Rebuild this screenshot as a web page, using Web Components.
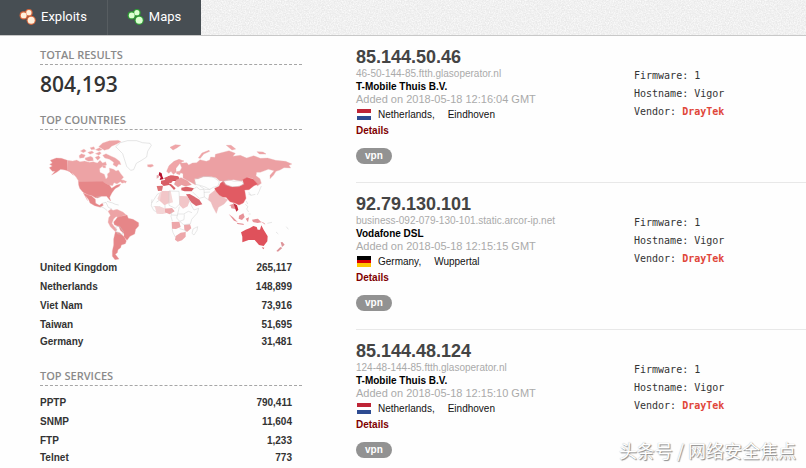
<!DOCTYPE html>
<html lang="en">
<head>
<meta charset="utf-8">
<title>Search results</title>
<style>
body{margin:0;background:#fefefe;color:#333;font-family:"Liberation Sans",Arial,sans-serif;font-size:10px}
</style>
</head>
<body>
<search-page></search-page>
<script>
function define(name, html, fill) {
  const t = document.createElement('template');
  t.innerHTML = html;
  customElements.define(name, class extends HTMLElement {
    constructor() {
      super();
      this.attachShadow({ mode: 'open' }).append(t.content.cloneNode(true));
    }
    connectedCallback() { if (fill) fill(this, this.shadowRoot); }
  });
}

define('nav-item', `
<style>
:host{display:block;--tone:#d9663b;--core:#fff0dc}
:host([tone=green]){--tone:#2f9e35;--core:#dcffd2}
:host(:not(:first-child)){border-left:1px solid #575d61}
a{display:flex;align-items:center;gap:4px;height:34px;padding:0 20px 0 19px;color:#fff;text-decoration:none;font:13px/34px Roboto,sans-serif}
svg{width:18px;height:18px;display:block}
</style>
<a href="#"><svg viewBox="0 0 18 18" aria-hidden="true"><g fill="var(--tone)"><circle cx="4.7" cy="7.4" r="4.1"/><circle cx="9.9" cy="4.7" r="3.8"/><circle cx="12.2" cy="12.3" r="4.6"/></g><g fill="var(--core)"><circle cx="4.7" cy="7.4" r="2.9"/><circle cx="9.9" cy="4.7" r="2.6"/><circle cx="12.2" cy="12.3" r="3.5"/></g></svg><slot></slot></a>`);

define('top-bar', `
<style>
:host{display:flex;height:36px;box-sizing:border-box;border-bottom:1px solid #c8c8c8;background-color:#eaeaea;
background-image:url("data:image/svg+xml,%3Csvg xmlns='http://www.w3.org/2000/svg' width='120' height='120'%3E%3Cfilter id='n'%3E%3CfeTurbulence type='fractalNoise' baseFrequency='.75' numOctaves='2' stitchTiles='stitch'/%3E%3CfeColorMatrix values='0 0 0 0 1 0 0 0 0 1 0 0 0 0 1 1.6 0 0 0 -.5'/%3E%3C/filter%3E%3Crect width='120' height='120' filter='url(%23n)'/%3E%3C/svg%3E")}
nav{display:flex;height:35px;background:#474e53}
</style><nav><slot></slot></nav>`);

define('side-section', `
<style>
:host{display:block}
h2{margin:0 0 9px;height:18px;border-bottom:1px dashed #a6a6a6;color:#8a8a8a;font:600 11px/16px "Open Sans",sans-serif;box-sizing:border-box}
:host([flush]) h2{margin-bottom:7px}
:host([map]) h2{margin-bottom:5px}
</style><h2></h2><slot></slot>`, (h, r) => r.querySelector('h2').textContent = h.getAttribute('heading'));

define('count-table', `
<style>
:host{display:block;padding-right:10px}
table{width:100%;border-collapse:collapse;font-weight:bold;font-size:10px;line-height:19px}
tr:last-child>*{line-height:16px;height:16px}
th,td{padding:0;text-align:left;height:19px}
td{text-align:right}
</style><table><tbody></tbody></table>`, (h, r) => {
  const b = r.querySelector('tbody');
  b.replaceChildren();
  h.getAttribute('rows').split(';').forEach(s => {
    const [k, v] = s.split('=');
    const tr = b.insertRow(), th = document.createElement('th');
    th.scope = 'row'; th.textContent = k; tr.append(th);
    tr.insertCell().textContent = v;
  });
});

define('world-map', `
<style>
:host{display:block}
svg{display:block;width:100%;height:auto;overflow:visible}
</style>
<svg viewBox="0 0 786 369" role="img" aria-label="Results by country">
<g stroke-linejoin="round">
<g fill="#eda3a5" stroke="#f6cdce" stroke-width="1">
<path d="M83 76L98 78 110 75 120 80 134 78 148 82 160 80 172 84 180 76 188 84 197 80 200 90 186 95 179 101 180 112 193 118 198 132 203 126 202 117 209 111 208 99 221 103 228 108 235 105 243 117 251 127 244 134 251 135 257 142 246 145 241 140 231 147 222 143 218 152 208 151 198 147 190 142 116 139 108 126 97 115 83 107Z"/>
<path d="M117 62L124 56 136 60 132 68 119 70ZM135 69L152 64 159 68 160 77 145 79 136 74ZM121 48L132 42 139 48 130 53ZM143 52L156 48 162 53 150 58ZM150 38L162 35 165 43 154 44ZM166 56L179 50 184 54 177 61ZM165 67L176 62 181 68 173 76ZM166 44L178 38 187 44 176 48ZM176 35L188 24 208 17 235 16 243 20 229 28 215 34 207 42 193 46ZM188 61L198 56 214 64 226 69 239 79 243 89 236 88 230 96 219 89 221 82 208 73 194 69ZM187 92L197 92 197 99 189 98ZM247 135L260 139 256 145Z"/>
<path d="M322 89L337 88 341 93 332 97 323 95Z"/>
<path d="M204 229L213 222 219 226 231 223 249 231 259 240 247 243 239 248 228 245 221 252 216 265 221 272 231 284 226 290 211 275 204 262 206 248 211 241Z"/>
</g>
<g fill="#e68688" stroke="#eda8a9" stroke-width="1">
<path d="M82 76L64 70 49 69 31 76 37 84 29 88 37 93 28 98 37 109 45 109 35 120 51 111 62 103 75 105 88 109 100 121 94 111 83 106Z"/>
<path d="M115 139L188 139 199 146 208 150 215 160 229 151 242 147 238 154 225 161 216 173 209 187 212 198 207 193 200 184 185 184 173 189 166 188 156 182 143 179 129 172 119 160 116 150Z"/>
<path d="M130 174L145 180 155 183 166 193 167 205 178 211 187 205 190 211 181 217 164 212 150 204 146 194 136 182 143 197Z"/>
<path d="M232 247L247 243 261 240 265 250 279 253 296 263 296 273 287 283 284 297 270 304 261 316 252 306 252 296 241 286 237 275 223 269 221 261 228 253Z"/>
<path d="M226 290L239 293 253 306 259 318 256 326 244 330 242 338 234 344 232 353 226 358 237 372 225 374 217 364 217 348 221 330 221 312Z"/>
</g>
<g fill="none" stroke="#c9c9c9" stroke-width="1.4">
<path d="M227 35L241 23 263 17 290 17 307 23 330 25 334 31 323 49 320 66 303 77 289 85 281 104 272 106 260 94 254 75 248 56 237 45Z"/>
<path d="M168 187L183 184M187 205L198 202 205 217 216 222M179 213L192 219 202 227M201 199L218 204 226 208 236 210M227 276L238 273 250 290 247 298 232 296Z"/>
<path d="M352 178L365 171 378 169M335 204L352 178M336 193L334 212 341 226 360 236 375 231 390 234M349 202L366 190 375 202 390 195M341 215H360L364 229M375 202V231"/>
</g>
<path d="M344 213L362 215 374 220 390 222 390 232 368 237 350 236Z" fill="#f3d4d5"/>
<path d="M352 191L360 173 377 169 392 167 399 202 375 209 356 196Z" fill="#f5d8d8"/>
<path d="M358 111L365 115 367 124 371 132 359 135 362 126 356 120Z" fill="#b5102c"/><path d="M350 121L356 120 357 127 350 131Z" fill="#e3a3a9"/>
<path d="M350 153L369 152 366 167 354 168Z" fill="#dd7376"/><path d="M363 137L378 134 390 139 387 150 371 153 363 145Z" fill="#d85e66"/><path d="M384 124L400 122 418 128 409 138 389 138Z" fill="#c52f42"/>
</g>
<g transform="translate(375 0)" stroke-linejoin="round">
<path fill="#eca0a3" stroke="#edbbbd" d="M43 81L52 84 66 83 71 90 82 84 95 83 105 74 124 79 134 75 137 66 150 67 151 58 177 51 192 47 211 55 204 64 226 61 245 69 266 62 286 70 308 69 332 76 362 79 381 87 372 91 377 99 357 98 345 105 333 109 326 120 315 131 315 121 327 107 310 103 286 112 275 112 273 122 285 131 289 145 277 153 264 131 247 127 229 139 206 134 178 138 164 138 153 128 140 125 115 125 99 132 89 131 92 150 69 137 54 129 54 116 43 112 50 98Z"/>
<path fill="#f0a5a8" stroke="#e4a0a2" d="M5 109L12 92 27 79 42 73 57 78 46 83 40 91 33 100 33 112 25 118 18 109 11 115ZM34 110L49 108 44 119 35 116ZM15 37L31 29 47 31 35 39 24 45ZM100 69L111 54 132 46 134 49 116 57 106 70ZM184 31L198 31 212 42 201 45ZM276 50L294 51 303 57 283 57Z"/>
<path fill="#da6067" d="M-3 129L17 121 40 124 43 133 24 137 18 145 5 141ZM9 147L18 147 32 160 27 165 17 154ZM49 158L65 155 87 160 80 169 59 169 49 166Z"/>
<path fill="#eb9da0" stroke="#df8e94" d="M33 135L48 128 67 137 79 149 61 154 50 149 39 156 28 148Z"/>
<path fill="#e15b63" stroke="#e77a7e" d="M149 160L162 154 166 145 175 138 183 149 202 156 224 154 236 147 233 134 246 127 265 133 278 148 267 152 252 164 239 165 241 178 243 190 235 204 222 210 209 204 195 200 183 187 167 187 153 174Z"/>
<path fill="#db6971" d="M63 178L74 177 86 184 103 194 112 208 93 213 80 203 72 193Z"/>
<path fill="#efbcbf" stroke="#e6b2b4" d="M133 179L150 166 163 181 176 188 188 194 177 207 160 217 154 235 144 216 138 201 130 195Z"/>
<path fill="#f2c6c8" d="M-10 168L13 168 12 202 -2 211 -15 197ZM43 183L67 184 74 198 68 214 54 221 43 210Z"/>
<path fill="#eda7aa" d="M0 221L21 219 29 229 14 238 0 232ZM20 261L43 260 47 276 33 282 21 281ZM32 303L47 293 62 291 62 305 51 316 38 320 30 314ZM57 270L75 268 79 280 66 291 58 284Z"/>
<path fill="#e79298" d="M192 211L204 207 215 211 218 226 210 222 199 220 197 212ZM191 237L204 247 218 261 207 257ZM215 263L235 266 237 270 217 267ZM222 242L235 235 239 246 231 255 221 251ZM242 251L252 247 249 262ZM261 254L279 251 289 262 278 264 264 261ZM286 259L298 264 301 269Z"/>
<path fill="#c62f40" d="M205 204L216 211 220 224 214 230 210 218Z"/>
<path fill="#df515b" d="M228 292L242 284 255 279 265 273 275 276 278 284 285 284 289 271 296 284 308 304 307 319 296 333 282 330 269 315 251 315 232 322 232 305Z"/><path fill="#df6970" d="M290 337L298 338 295 343Z"/>
<path fill="#dd9499" d="M347 322L352 321 359 329 351 336ZM346 336L352 339 339 350 334 348Z"/>
<path fill="none" stroke="#c9c9c9" stroke-width="1.3" d="M90 133L107 126 127 124 147 128 163 140 159 153 145 157 134 163 118 155 104 151 92 148 88 138M104 153L120 163 136 164M84 163L95 156 105 164 117 163 118 186 103 190 92 180 82 170M117 172L135 171M130 194L118 186M173 141L190 134 207 139 230 137 236 148 217 155 196 154 181 149ZM12 168L42 169 44 207 31 220 12 211ZM70 189L80 213 87 225 101 220 97 234 80 253 76 267M43 215L38 237 56 237 70 229 81 233M21 226L18 244 22 259M38 237L35 249 44 259 57 254 58 238M20 240L38 241M44 259L56 269 76 267M21 281L24 293 31 306M44 281L61 286 61 293M84 282L98 275 96 286 87 300 81 295ZM241 208L249 215 245 222 251 231M244 198L248 207M277 180L282 170 289 153M251 171L258 181 250 177M258 181L271 178M251 237L257 237M307 265L321 262M333 291L340 297M364 275L370 283"/>
</g>
</svg>`);

define('country-flag', `
<style>
:host{display:grid;width:14px;height:11px;grid-template-rows:4px 3px 4px;--a:#be2436;--b:#fff;--c:#2d4b91}
:host([country=Germany]){--a:#000;--b:#d90000;--c:#ffc800}
i:nth-of-type(1){background:var(--a)}
i:nth-of-type(2){background:var(--b)}
i:nth-of-type(3){background:var(--c)}
</style><i></i><i></i><i></i>`);

define('host-result', `
<style>
:host{display:grid;grid-template-columns:278px 1fr;height:147px;box-sizing:border-box;padding-top:11px;border-bottom:1px solid #e8e8e8}
:host(:last-child){border-bottom:0}
h3{margin:0;font-size:18px;line-height:20px;color:#444}
p{margin:0;line-height:13px;color:#aaa}
#date{font-size:11px}
.org{font-weight:bold}
a{color:inherit;text-decoration:none}
.org a{color:#000}
.place{display:flex;align-items:center;gap:7px;height:17px;color:#111;padding-left:1px}
.place span+span{padding-left:6px}
.details{display:block;font-weight:bold;line-height:16px;color:#800000}
.tag{display:inline-block;margin-top:9px;padding:0 9px;border-radius:8px;background:#929292;color:#fff;line-height:16px;font-weight:bold}
dl{margin:20px 0 0;font:10px/18px "DejaVu Sans Mono",monospace;color:#333}
dl div{display:flex;gap:6px}
dd,dt{margin:0}
b{color:#e0463a}
</style>
<section>
<h3><a href="#" id="ip"></a></h3>
<p id="name"></p>
<p class="org"><a href="#" id="org"></a></p>
<p id="date"></p>
<div class="place"><country-flag></country-flag><span id="country"></span><span id="city"></span></div>
<a class="details" href="#">Details</a>
<a class="tag" href="#">vpn</a>
</section>
<dl><div><dt>Firmware:</dt><dd>1</dd></div><div><dt>Hostname:</dt><dd>Vigor</dd></div><div><dt>Vendor:</dt><dd><b>DrayTek</b></dd></div></dl>`, (h, r) => {
  const g = k => h.getAttribute(k);
  for (const k of ['ip', 'name', 'org', 'city']) r.getElementById(k).textContent = g(k);
  r.getElementById('date').textContent = 'Added on 2018-05-18 ' + g('time') + ' GMT';
  r.getElementById('country').textContent = g('country') + ',';
  r.querySelector('country-flag').setAttribute('country', g('country'));
});

define('water-mark', `
<style>
:host{position:absolute;right:10px;bottom:6px;font:18px/24px "Noto Sans CJK SC",sans-serif;color:#fff;text-shadow:1px 1px 1px #888,0 0 1px #aaa;pointer-events:none}
</style><slot></slot>`);

define('search-page', `
<style>
:host{display:block;position:relative;height:100vh;overflow:hidden}
main{display:grid;grid-template-columns:262px 1fr;gap:54px;padding-left:40px}
aside{padding-top:11px}
.total{font:600 21px/20px "Open Sans",sans-serif;color:#333;margin:0 0 18px}
.services{margin-top:18px}
</style>
<top-bar><nav-item>Exploits</nav-item><nav-item tone="green">Maps</nav-item></top-bar>
<main>
<aside>
<side-section heading="TOTAL RESULTS"><p class="total">804,193</p></side-section>
<side-section heading="TOP COUNTRIES" map><world-map></world-map><count-table rows="United Kingdom=265,117;Netherlands=148,899;Viet Nam=73,916;Taiwan=51,695;Germany=31,481"></count-table></side-section>
<side-section class="services" heading="TOP SERVICES" flush><count-table rows="PPTP=790,411;SNMP=11,604;FTP=1,233;Telnet=773"></count-table></side-section>
</aside>
<div>
<host-result ip="85.144.50.46" name="46-50-144-85.ftth.glasoperator.nl" org="T-Mobile Thuis B.V." time="12:16:04" country="Netherlands" city="Eindhoven"></host-result>
<host-result ip="92.79.130.101" name="business-092-079-130-101.static.arcor-ip.net" org="Vodafone DSL" time="12:15:15" country="Germany" city="Wuppertal"></host-result>
<host-result ip="85.144.48.124" name="124-48-144-85.ftth.glasoperator.nl" org="T-Mobile Thuis B.V." time="12:15:10" country="Netherlands" city="Eindhoven"></host-result>
</div>
</main>
<water-mark>头条号 / 网络安全焦点</water-mark>`);
</script>
</body>
</html>
